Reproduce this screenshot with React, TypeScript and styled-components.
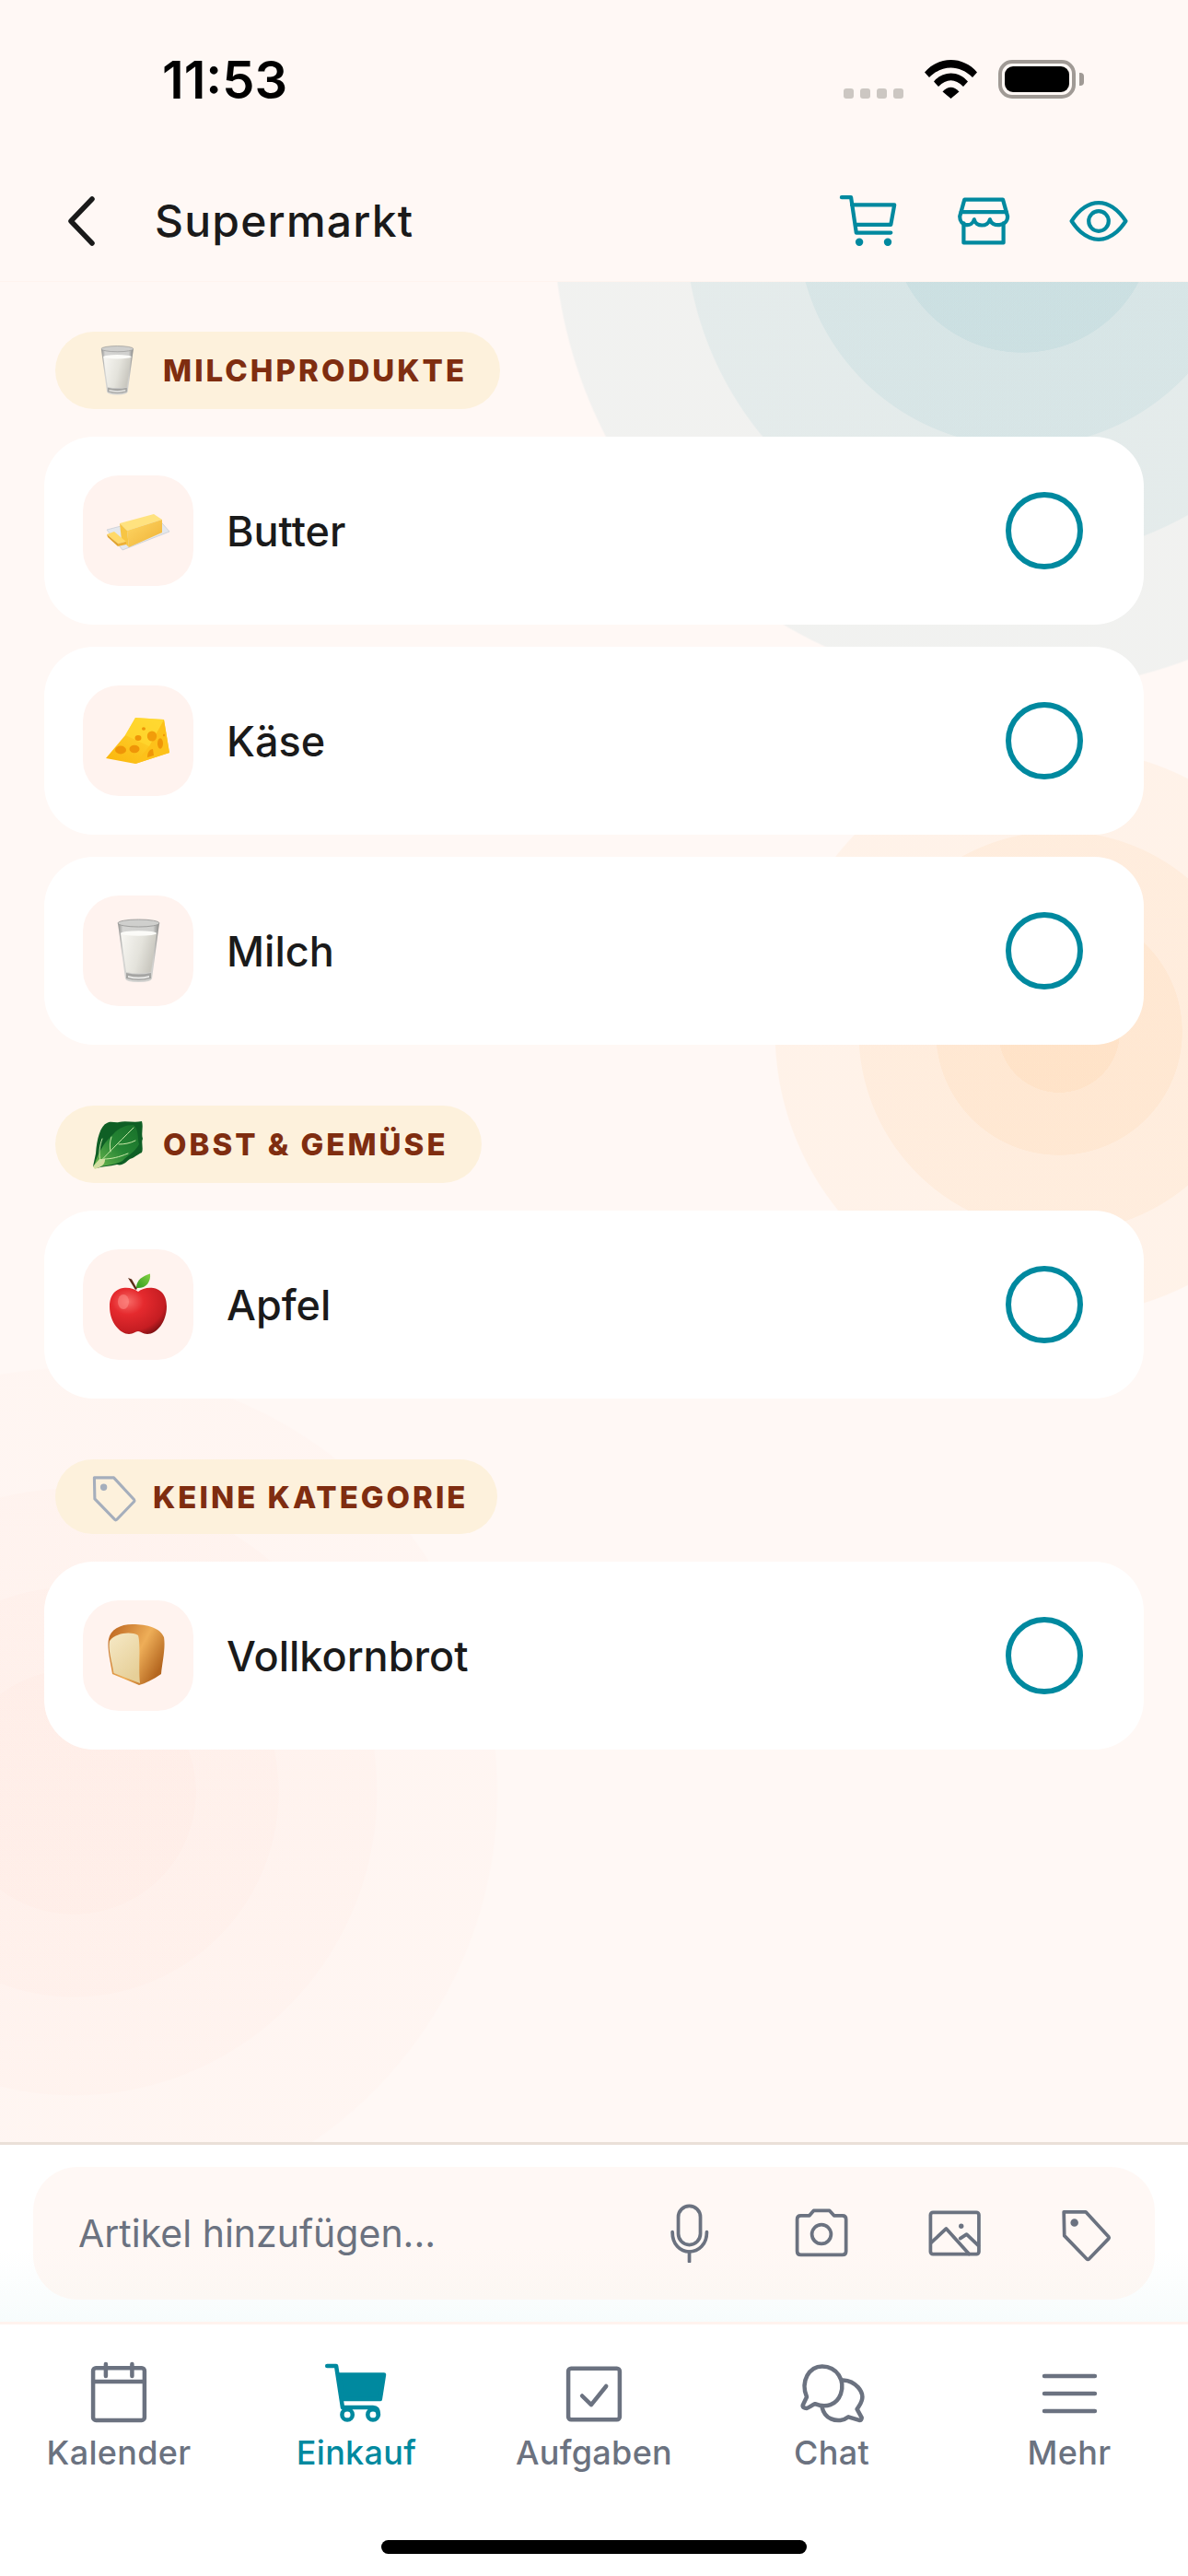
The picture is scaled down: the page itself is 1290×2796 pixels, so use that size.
import React from 'react';
import styled, { createGlobalStyle } from 'styled-components';

const colors = {
  base: '#fff8f5',
  teal: '#00899f',
  grey: '#6b7280',
  text: '#1a1a1a',
  brown: '#7f2d10',
  pill: '#fdf1dc',
  iconBox: '#fff3ef',
};

// one flat disc of the decorative background, as a gradient layer
const disc = (x: number, y: number, r: number, color: string) =>
  `radial-gradient(circle ${r}px at ${x}px ${y}px, ${color} 99.6%, transparent 100%)`;

const rings = (x: number, y: number, radii: number[], color: string) =>
  radii.map((r) => disc(x, y, r, color)).join(', ');

const backdrop = [
  rings(1110, -66, [143, 245, 367, 510], 'rgba(0, 128, 150, 0.055)'),
  rings(1150, 814, [66, 134, 218, 309], 'rgba(255, 165, 70, 0.07)'),
  rings(80, 1639, [133, 223, 330, 461], 'rgba(255, 120, 80, 0.018)'),
].join(', ');

const GlobalStyle = createGlobalStyle`
  html, body {
    margin: 0;
    padding: 0;
    background: #ffffff;
  }
  * {
    box-sizing: border-box;
  }
`;

const Screen = styled.div`
  width: 1290px;
  height: 2796px;
  display: flex;
  flex-direction: column;
  overflow: hidden;
  background: #ffffff;
  font-family: Inter, 'Liberation Sans', sans-serif;
`;

const StatusBar = styled.div`
  height: 174px;
  flex: none;
  display: flex;
  align-items: center;
  justify-content: space-between;
  padding: 44px 122px 46px 176px;
  background: ${colors.base};
`;

const Clock = styled.span`
  font-size: 56px;
  font-weight: 600;
  color: #000000;
  margin-top: 2px;
`;

const StatusIcons = styled.div`
  display: flex;
  align-items: center;
  gap: 23px;
`;

const SignalDots = styled.div`
  display: flex;
  gap: 7px;
  align-self: flex-end;
`;

const SignalDot = styled.span`
  width: 11px;
  height: 11px;
  border-radius: 3px;
  background: #ccc7c2;
`;

const Battery = styled.div`
  position: relative;
  width: 84px;
  height: 42px;
  padding: 3px;
  border: 4px solid #a09a95;
  border-radius: 15px;
  &::after {
    content: '';
    position: absolute;
    right: -13px;
    top: 10px;
    width: 5px;
    height: 14px;
    border-radius: 0 4px 4px 0;
    background: #a09a95;
  }
`;

const BatteryLevel = styled.div`
  width: 100%;
  height: 100%;
  border-radius: 9px;
  background: #000000;
`;

const Header = styled.header`
  height: 132px;
  flex: none;
  display: flex;
  align-items: center;
  padding: 0 61px 0 67px;
  background: ${colors.base};
  border-bottom: 1px solid #fff4ef;
`;

const Title = styled.h1`
  margin: 0 0 0 61px;
  font-size: 48px;
  font-weight: 500;
  letter-spacing: 1.2px;
  color: ${colors.text};
`;

const HeaderActions = styled.div`
  margin-left: auto;
  display: flex;
  gap: 53px;
  color: ${colors.teal};
`;

const Content = styled.main`
  flex: 1;
  min-height: 0;
  display: flex;
  flex-direction: column;
  gap: 66px;
  padding: 54px 48px 0;
  background-color: ${colors.base};
  background-image: ${backdrop};
  background-repeat: no-repeat;
`;

const Section = styled.section`
  display: flex;
  flex-direction: column;
  gap: 30px;
`;

const CategoryPill = styled.div<{ $icon?: boolean }>`
  align-self: flex-start;
  margin-left: 12px;
  display: flex;
  align-items: center;
  gap: ${(p) => (p.$icon ? '13px' : '22px')};
  padding: ${(p) => (p.$icon ? '12px 31px 12px 36px' : '14px 36px 14px 39px')};
  border-radius: 42px;
  background: ${colors.pill};
  color: #a5aebc;
`;

const CategoryName = styled.span`
  font-size: 33px;
  font-weight: 800;
  letter-spacing: 3px;
  color: ${colors.brown};
`;

const ItemList = styled.div`
  display: flex;
  flex-direction: column;
  gap: 24px;
`;

const ItemCard = styled.div`
  display: flex;
  align-items: center;
  gap: 36px;
  padding: 42px;
  border-radius: 54px;
  background: #ffffff;
`;

const ItemIcon = styled.div`
  width: 120px;
  height: 120px;
  flex: none;
  display: flex;
  align-items: center;
  justify-content: center;
  border-radius: 39px;
  background: ${colors.iconBox};
`;

const ItemName = styled.span`
  font-size: 45px;
  font-weight: 500;
  color: ${colors.text};
`;

const Radio = styled.span`
  width: 84px;
  height: 84px;
  margin-left: auto;
  margin-right: 24px;
  border: 6px solid ${colors.teal};
  border-radius: 50%;
`;

const InputPanel = styled.div`
  flex: none;
  padding: 24px 36px;
  background: linear-gradient(#ffffff 0%, #ffffff 60%, #f7fcfc 100%);
  border-top: 3px solid #eae0d8;
  border-bottom: 3px solid #fff3ee;
  height: 198px;
`;

const InputBox = styled.div`
  height: 144px;
  display: flex;
  align-items: center;
  padding: 0 42px 0 49px;
  border-radius: 48px;
  background: linear-gradient(#fff8f5 0%, #fff8f5 60%, #fcf7f3 100%);
  color: ${colors.grey};
`;

const Placeholder = styled.span`
  font-size: 41px;
  font-weight: 400;
  color: ${colors.grey};
  margin-right: auto;
`;

const InputActions = styled.div`
  display: flex;
  gap: 80px;
`;

const TabBar = styled.nav`
  flex: none;
  display: grid;
  grid-template-columns: repeat(5, 258px);
  padding-top: 37px;
`;

const Tab = styled.div<{ $active?: boolean }>`
  display: flex;
  flex-direction: column;
  align-items: center;
  gap: 8px;
  color: ${(p) => (p.$active ? colors.teal : colors.grey)};
`;

const TabLabel = styled.span`
  font-size: 36px;
  line-height: 44px;
  font-weight: 500;
  letter-spacing: 0.3px;
`;

const HomeIndicator = styled.div`
  flex: none;
  width: 462px;
  height: 15px;
  margin: 73px auto 24px;
  border-radius: 8px;
  background: #000000;
`;

type IconProps = { size?: number; stroke?: number; children: React.ReactNode };

const LineIcon = ({ size = 64, stroke = 1.4, children }: IconProps) => (
  <svg
    width={size}
    height={size}
    viewBox="0 0 24 24"
    fill="none"
    stroke="currentColor"
    strokeWidth={stroke}
    strokeLinecap="round"
    strokeLinejoin="round"
  >
    {children}
  </svg>
);

const WifiIcon = () => (
  <svg width="57" height="42" viewBox="0 0 57 42">
    <path d="M0 13.5C15-4.5 42-4.5 57 13.5L52 19C38 5 19 5 5 19Z" fill="#000" />
    <path d="M10 23.5C20 11.5 37 11.5 47 23.5L42 29C33 20 24 20 15 29Z" fill="#000" />
    <path d="M19.5 34.5C25 28 32 28 37.5 34.5L28.5 42Z" fill="#000" />
  </svg>
);

const TagPath = () => (
  <>
    <path d="M2.7 3.3H11.6L20.9 13.4Q21.2 13.8 20.9 14.2L13 22.4Q12.5 22.9 12 22.4L2.9 13Z" />
    <circle cx="7" cy="7.7" r="0.9" fill="currentColor" />
  </>
);

const MilkEmoji = ({ size = 72 }: { size?: number }) => (
  <svg width={size} height={size} viewBox="0 0 72 72">
    <defs>
      <linearGradient id="milkFill" x1="0" y1="0" x2="1" y2="0.3">
        <stop offset="0" stopColor="#f8f7f3" />
        <stop offset="0.6" stopColor="#e4e3dc" />
        <stop offset="1" stopColor="#c9c7bf" />
      </linearGradient>
      <linearGradient id="milkGlass" x1="0" y1="0" x2="1" y2="0">
        <stop offset="0" stopColor="#8f8f8d" />
        <stop offset="0.12" stopColor="#d4d4d2" />
        <stop offset="0.85" stopColor="#d0d0ce" />
        <stop offset="1" stopColor="#878785" />
      </linearGradient>
    </defs>
    <path d="M14 6L22 66Q22.5 70 36.5 70Q50.5 70 51 66L59 6Z" fill="url(#milkGlass)" />
    <ellipse cx="36.5" cy="6" rx="22.5" ry="4" fill="#cfcfcd" stroke="#929290" strokeWidth="0.8" />
    <path d="M17 17L23 59Q36.5 62 50 59L56 17Z" fill="url(#milkFill)" />
    <ellipse cx="36.5" cy="17" rx="19.5" ry="2.8" fill="#fbfbf8" />
    <path d="M23 60Q36.5 63 50 60L50 66Q36.5 70 23 66Z" fill="#a5a5a3" />
    <path d="M25 63Q36.5 66 48 63L48 65Q36.5 68 25 65Z" fill="#e8e8e6" />
  </svg>
);

const ButterEmoji = () => (
  <svg width="72" height="72" viewBox="0 0 72 72">
    <defs>
      <linearGradient id="butterSide" x1="0" y1="0" x2="1" y2="1">
        <stop offset="0" stopColor="#ffd765" />
        <stop offset="1" stopColor="#eeb136" />
      </linearGradient>
    </defs>
    <path d="M2 35L56 21L70 37L19 57Z" fill="#e4e7ec" stroke="#c9ced6" strokeWidth="0.8" />
    <path d="M16 28L53 18L62 24L24 36Z" fill="#ffe27f" />
    <path d="M24 36L62 24L62 38L26 54Z" fill="url(#butterSide)" />
    <path d="M16 28L24 36L26 54L18 46Z" fill="#f7c544" />
    <path d="M2 40L10 37L23 48L14 50Z" fill="#ffd969" />
    <path d="M2 40L14 50L14 53L3 43Z" fill="#e0a32e" />
    <path d="M14 50L23 48L23 51L14 53Z" fill="#eeb136" />
  </svg>
);

const CheeseEmoji = () => (
  <svg width="72" height="72" viewBox="0 0 72 72">
    <defs>
      <linearGradient id="cheeseFace" x1="0" y1="1" x2="1" y2="0">
        <stop offset="0" stopColor="#fbb50c" />
        <stop offset="1" stopColor="#ffdc3a" />
      </linearGradient>
    </defs>
    <path d="M1 55L22 30L33 11L64 13L70 49L33 61Z" fill="url(#cheeseFace)" />
    <path d="M64 13L70 49L33 61L48 42Z" fill="#fdc11a" />
    <path d="M33 11L64 13L48 42L22 30Z" fill="#ffd92f" opacity="0.7" />
    <ellipse cx="17" cy="46" rx="6" ry="4.4" fill="#ef9508" />
    <ellipse cx="32" cy="45" rx="5.5" ry="4.2" fill="#ef9508" />
    <ellipse cx="36" cy="33" rx="3.5" ry="3" fill="#ef9508" />
    <ellipse cx="42" cy="23" rx="2" ry="1.7" fill="#ef9508" />
    <ellipse cx="51" cy="31" rx="5.2" ry="5.5" fill="#f29c0a" />
    <ellipse cx="60" cy="39" rx="3" ry="5.8" fill="#ef9508" />
    <ellipse cx="64" cy="30" rx="1" ry="1.2" fill="#ef9508" />
    <path d="M46 54C46 48 49 45 52 45L53 52Z" fill="#ef9508" />
  </svg>
);

const AppleEmoji = () => (
  <svg width="72" height="72" viewBox="0 0 72 72">
    <defs>
      <radialGradient id="appleBody" cx="0.32" cy="0.3" r="0.8">
        <stop offset="0" stopColor="#f76a66" />
        <stop offset="0.35" stopColor="#e52a2e" />
        <stop offset="0.8" stopColor="#c51d22" />
        <stop offset="1" stopColor="#7e1013" />
      </radialGradient>
      <linearGradient id="appleLeaf" x1="0" y1="1" x2="1" y2="0">
        <stop offset="0" stopColor="#2f9a1f" />
        <stop offset="1" stopColor="#86d243" />
      </linearGradient>
    </defs>
    <path d="M25 7L29 8.5L35 19L33 20Z" fill="#5b2c18" />
    <path d="M34 18C34 9 41 5 49 2.5C50 12 44 19 34 18Z" fill="url(#appleLeaf)" />
    <path
      d="M36 22C28 15 5 14 5 38C5 56 17 68 26 68C31 68 33 65 36 65C39 65 41 68 46 68C56 68 67 55 67 38C67 14 44 15 36 22Z"
      fill="url(#appleBody)"
    />
    <ellipse cx="20" cy="33" rx="6" ry="8" fill="#ff8f8b" opacity="0.55" />
  </svg>
);

const BreadEmoji = () => (
  <svg width="72" height="72" viewBox="0 0 72 72">
    <defs>
      <linearGradient id="breadCrust" x1="0" y1="0" x2="1" y2="0.6">
        <stop offset="0" stopColor="#b9601c" />
        <stop offset="0.6" stopColor="#eeae58" />
        <stop offset="1" stopColor="#b4661f" />
      </linearGradient>
      <linearGradient id="breadFace" x1="0" y1="0" x2="0.6" y2="1">
        <stop offset="0" stopColor="#f6e9c6" />
        <stop offset="1" stopColor="#e6cf98" />
      </linearGradient>
    </defs>
    <path
      d="M4 18C6 8 16 2 30 2C46 2 60 6 64 16C66 28 62 44 61 56C52 62 44 66 37 68L8 56C6 42 2 28 4 18Z"
      fill="url(#breadCrust)"
    />
    <path d="M5 20C11 12 27 9 36 14C39 24 36 50 38 66L9.5 55C8 44 3 30 5 20Z" fill="url(#breadFace)" />
  </svg>
);

const LettuceEmoji = () => (
  <svg width="56" height="56" viewBox="0 0 56 56">
    <defs>
      <linearGradient id="leafFront" x1="0" y1="1" x2="1" y2="0">
        <stop offset="0" stopColor="#6fb850" />
        <stop offset="0.5" stopColor="#268634" />
        <stop offset="1" stopColor="#17702a" />
      </linearGradient>
    </defs>
    <path
      d="M5 38C6 22 10 8 17 5C21 2 26 5 30 4C38 2 46 5 55 3C57 10 54 16 56 22C54 26 57 32 55 37C49 40 46 43 42 44C38 47 34 52 28 50C20 52 12 52 6 54L2 52Z"
      fill="#0f5f25"
    />
    <path
      d="M3 52C8 36 14 26 24 17C30 10 38 7 46 7C52 12 50 22 52 28C48 36 40 40 34 46C26 50 14 52 3 52Z"
      fill="url(#leafFront)"
    />
    <path d="M2 52L4 55L9 53C14 50 15 48 15 44L9 44Z" fill="#d4dda0" />
    <path
      d="M5 52C16 40 28 28 46 10M21 36C20 30 20 26 22 20M30 28C36 28 42 27 48 24M14 44C22 44 30 42 40 38M10 46C8 38 9 30 12 22"
      stroke="#c9e8a8"
      strokeWidth="1"
      fill="none"
      strokeLinecap="round"
    />
  </svg>
);

const categories = [
  {
    name: 'MILCHPRODUKTE',
    icon: <MilkEmoji size={56} />,
    items: [
      { name: 'Butter', icon: <ButterEmoji /> },
      { name: 'Käse', icon: <CheeseEmoji /> },
      { name: 'Milch', icon: <MilkEmoji /> },
    ],
  },
  {
    name: 'OBST & GEMÜSE',
    icon: <LettuceEmoji />,
    items: [{ name: 'Apfel', icon: <AppleEmoji /> }],
  },
  {
    name: 'KEINE KATEGORIE',
    isTag: true,
    icon: (
      <LineIcon size={57} stroke={1.3}>
        <TagPath />
      </LineIcon>
    ),
    items: [{ name: 'Vollkornbrot', icon: <BreadEmoji /> }],
  },
];

const App = () => {
  return (
    <Screen>
      <GlobalStyle />
      <StatusBar>
        <Clock>11:53</Clock>
        <StatusIcons>
          <SignalDots>
            <SignalDot />
            <SignalDot />
            <SignalDot />
            <SignalDot />
          </SignalDots>
          <WifiIcon />
          <Battery>
            <BatteryLevel />
          </Battery>
        </StatusIcons>
      </StatusBar>

      <Header>
        <svg width="40" height="56" viewBox="0 0 40 56" fill="none" stroke="#1a1a1a" strokeWidth="5.5" strokeLinecap="round" strokeLinejoin="round">
          <path d="M33 4L10 28L33 52" />
        </svg>
        <Title>Supermarkt</Title>
        <HeaderActions>
          <LineIcon size={72}>
            <path d="M2.3 3.4H5.7L7.6 16.2H20.1" />
            <path d="M6 6.1H21.4L20.1 13.3H7.3" />
            <circle cx="8.7" cy="19.6" r="1.4" fill="currentColor" stroke="none" />
            <circle cx="19" cy="19.6" r="1.4" fill="currentColor" stroke="none" />
          </LineIcon>
          <LineIcon size={72}>
            <path d="M5.1 4.2H19L20.7 10.3C20.7 14 15 14.4 14.3 11.4C13.6 14.2 9.2 14.2 8.6 11.4C7.8 14.4 3.4 14 3.4 10.3Z" />
            <path d="M3.9 8.7H20.2" />
            <path d="M4.8 12.8V19.8H19.2V12.8" />
          </LineIcon>
          <LineIcon size={72}>
            <path d="M2.2 12C5 7.8 8 5.4 12 5.4S19 7.8 21.8 12C19 16.2 16 18.6 12 18.6S5 16.2 2.2 12Z" />
            <circle cx="12" cy="12" r="3.6" />
          </LineIcon>
        </HeaderActions>
      </Header>

      <Content>
        {categories.map((category) => (
          <Section key={category.name}>
            <CategoryPill $icon={category.isTag}>
              {category.icon}
              <CategoryName>{category.name}</CategoryName>
            </CategoryPill>
            <ItemList>
              {category.items.map((item) => (
                <ItemCard key={item.name}>
                  <ItemIcon>{item.icon}</ItemIcon>
                  <ItemName>{item.name}</ItemName>
                  <Radio />
                </ItemCard>
              ))}
            </ItemList>
          </Section>
        ))}
      </Content>

      <InputPanel>
        <InputBox>
          <Placeholder>Artikel hinzufügen...</Placeholder>
          <InputActions>
            <LineIcon>
              <rect x="7.7" y="0.9" width="9" height="15.8" rx="4.5" />
              <path d="M5.3 11.5C5.3 16.5 8.4 19.5 12.2 19.5S19.3 16.5 19.3 11.5" />
              <path d="M12.2 19.5V23.5" />
            </LineIcon>
            <LineIcon>
              <path d="M3.6 4.8H7.1L8.8 2.8H15.3L17.1 4.8H20.5Q22 4.8 22 6.3V19.3Q22 20.8 20.5 20.8H3.6Q2.1 20.8 2.1 19.3V6.3Q2.1 4.8 3.6 4.8Z" />
              <circle cx="12" cy="12.4" r="3.9" />
            </LineIcon>
            <LineIcon>
              <rect x="2.4" y="3.5" width="19.7" height="17" rx="1" />
              <path d="M2.8 15.7L8.8 10.1L18.1 20.4" />
              <path d="M14.5 14.1L17.1 12.4L21.9 17" />
              <circle cx="14.9" cy="9.1" r="1" fill="currentColor" stroke="none" />
            </LineIcon>
            <LineIcon>
              <TagPath />
            </LineIcon>
          </InputActions>
        </InputBox>
      </InputPanel>

      <TabBar>
        <Tab>
          <LineIcon size={72} stroke={1.5}>
            <rect x="2.7" y="3.4" width="18.6" height="18.9" rx="1" />
            <path d="M2.7 8.3H21.3M7.3 2V6.3M16.8 2V6.3" />
          </LineIcon>
          <TabLabel>Kalender</TabLabel>
        </Tab>
        <Tab $active>
          <LineIcon size={72} stroke={1.5}>
            <path d="M1.4 2.7H4.7L7 17.7H18Q20 17.7 20 20.3" />
            <path d="M5.7 5.8H22L20.6 14.7H7Z" fill="currentColor" />
            <circle cx="8.7" cy="20.3" r="1.9" />
            <circle cx="18" cy="20.3" r="1.9" />
          </LineIcon>
          <TabLabel>Einkauf</TabLabel>
        </Tab>
        <Tab>
          <LineIcon size={72} stroke={1.5}>
            <rect x="2.7" y="3.6" width="18.6" height="18.5" rx="1" />
            <path d="M7.7 13.5L11 16.7L16.4 10" />
          </LineIcon>
          <TabLabel>Aufgaben</TabLabel>
        </Tab>
        <Tab>
          <LineIcon size={72} stroke={1.5}>
            <path d="M3 13.9C0.6 8 4 2.8 8.6 2.8C14 2.8 17 8 15.3 12.8C13.8 16.8 10 18 6 16.4C5 16.8 4 17.6 3 18C2 18 1.4 17.6 1.6 16.8Z" />
            <path d="M16.2 7.8C20.5 8 24 12 22.9 15.2C22.5 16.5 22 17 21.2 18.3L22.9 21.4Q22.9 22.4 22 22.3L18.1 21.1C16.5 22.4 14 22.8 11.8 21.8C10 21 9 19.5 8.6 17.8" />
          </LineIcon>
          <TabLabel>Chat</TabLabel>
        </Tab>
        <Tab>
          <LineIcon size={72} stroke={1.5}>
            <path d="M3 6.3H21.3M3 12.7H21.3M3 19H21.3" />
          </LineIcon>
          <TabLabel>Mehr</TabLabel>
        </Tab>
      </TabBar>
      <HomeIndicator />
    </Screen>
  );
};

export default App;
